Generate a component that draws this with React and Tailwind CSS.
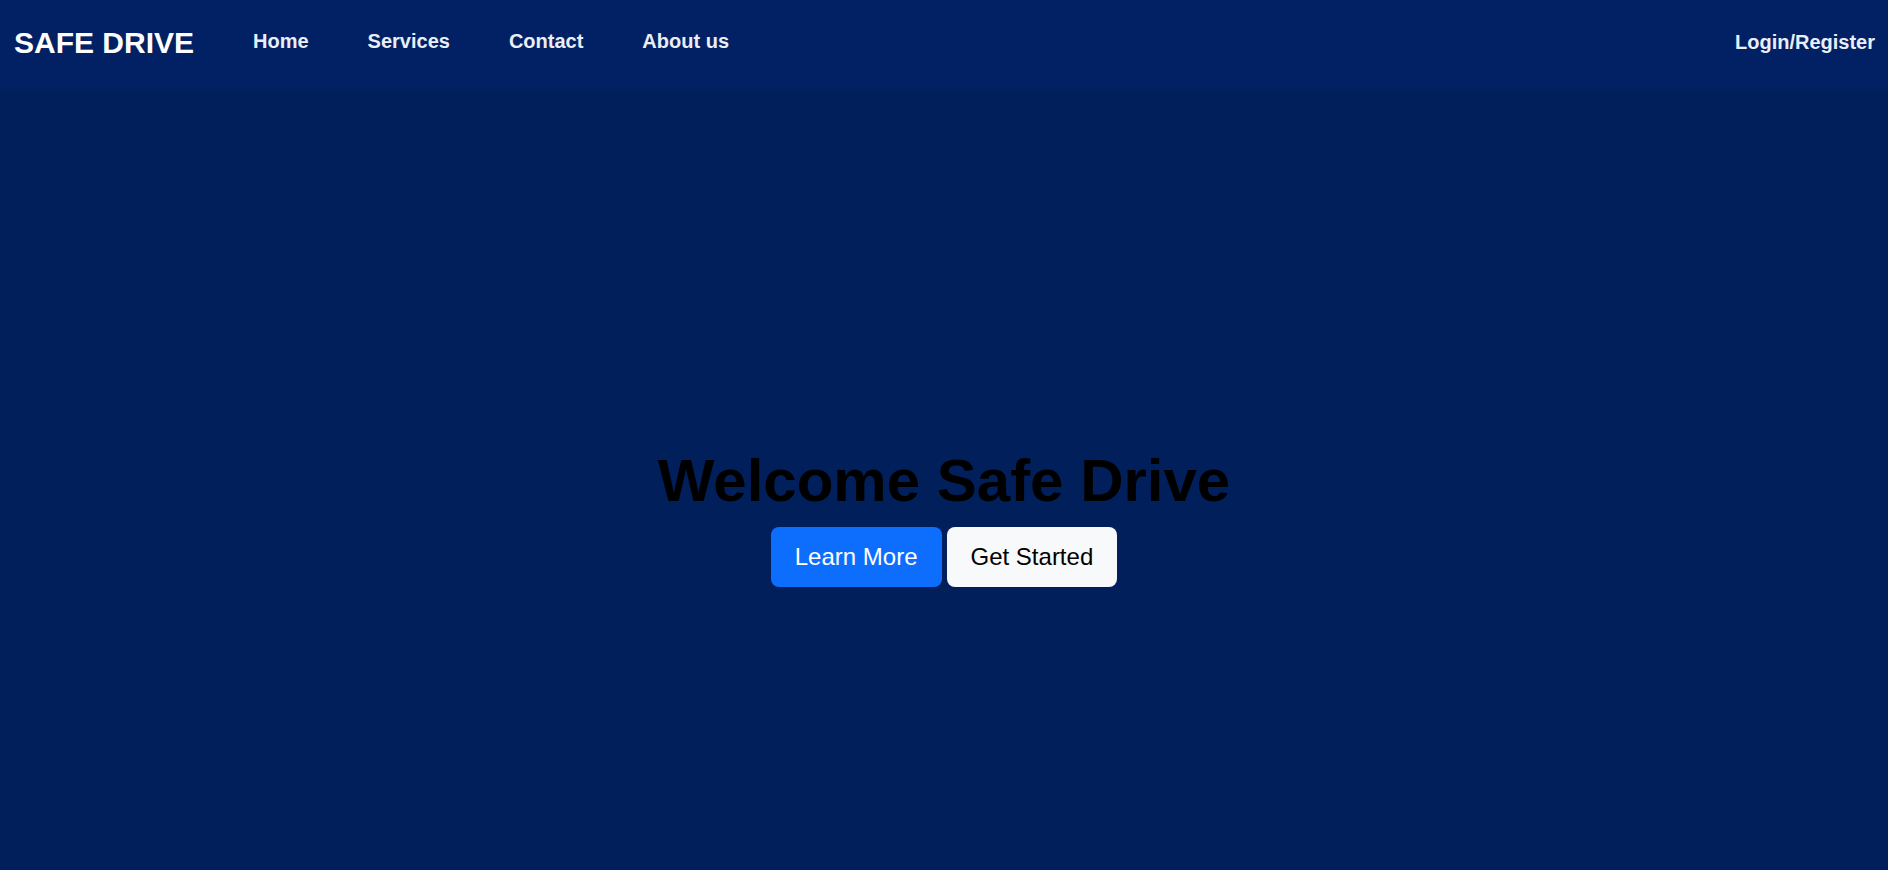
export default function App() {
  const links = ['Home', 'Services', 'Contact', 'About us']

  return (
    <div className="min-h-[870px] w-full bg-[#011f5b] font-['Liberation_Sans',Arial,sans-serif]">
      {/* Navbar */}
      <nav className="h-[89px] bg-[#022164] flex items-center justify-between px-[13px] pb-[4px]">
        <div className="flex items-center gap-[59px]">
          <a href="#" className="text-[30px] leading-[34px] font-bold text-white pl-[1px]">SAFE DRIVE</a>
          <ul className="flex items-center gap-[59px]">
            {links.map(l => (
              <li key={l}>
                <a href="#" className="text-[20px] leading-[23px] font-bold text-[#eaeef6]">{l}</a>
              </li>
            ))}
          </ul>
        </div>
        <a href="#" className="text-[20px] leading-[23px] font-bold text-[#eaeef6]">Login/Register</a>
      </nav>

      {/* Hero */}
      <section className="flex flex-col items-center pt-[356px]">
        <h1 className="text-[60px] leading-[72px] font-bold text-black">Welcome Safe Drive</h1>
        <div className="flex items-center gap-[5px] mt-[10px]">
          <button className="bg-[#0d6efd] text-white text-[24px] leading-[36px] px-6 py-3 rounded-lg">Learn More</button>
          <button className="bg-[#f8f9fa] text-black text-[24px] leading-[36px] px-6 py-3 rounded-lg">Get Started</button>
        </div>
      </section>
    </div>
  )
}
